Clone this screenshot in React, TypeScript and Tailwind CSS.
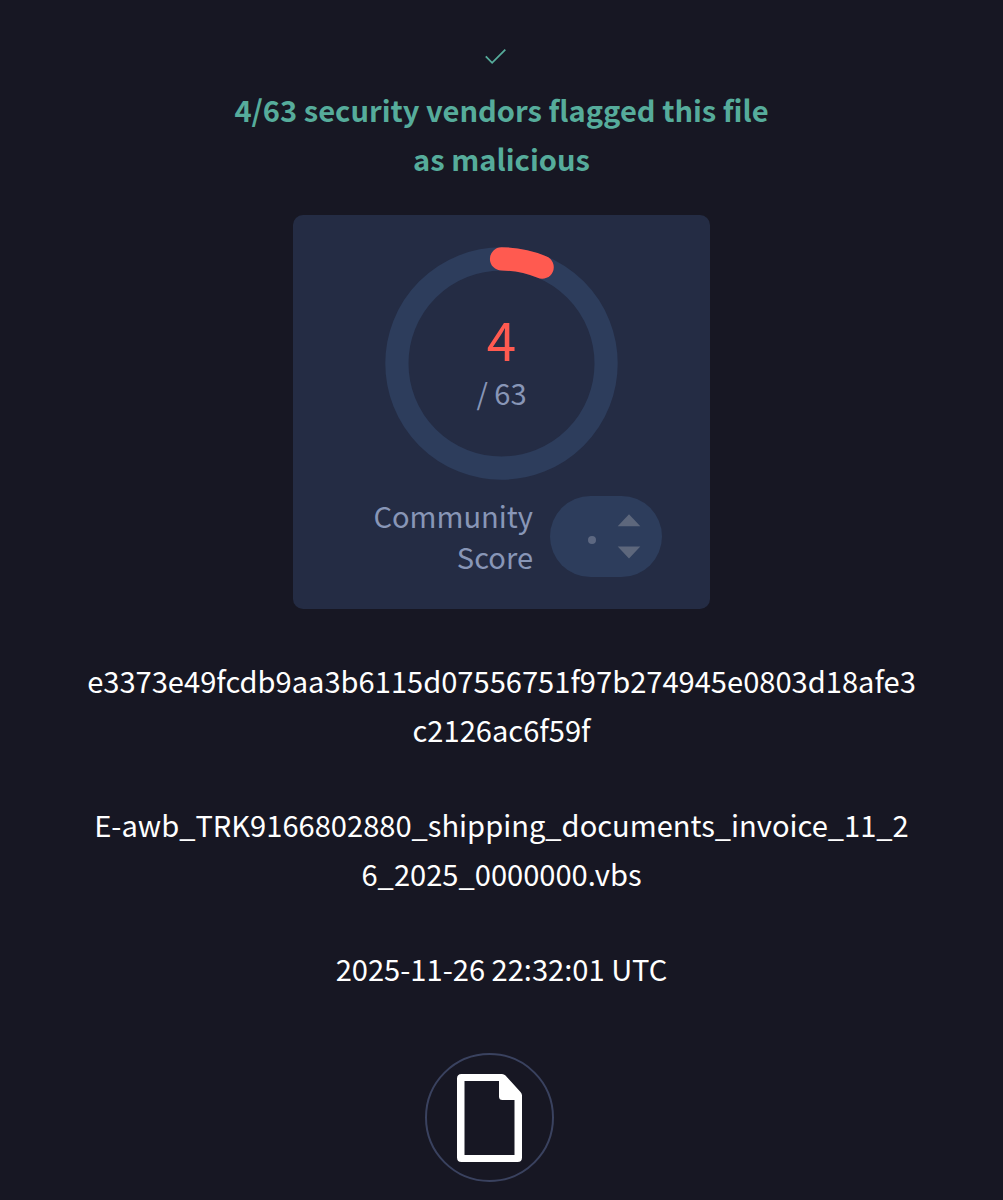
const DETECTIONS = 4;
const ENGINES = 63;

const report = {
  hash: ["e3373e49fcdb9aa3b6115d07556751f97b274945e0803d18afe3", "c2126ac6f59f"],
  fileName: ["E-awb_TRK9166802880_shipping_documents_invoice_11_2", "6_2025_0000000.vbs"],
  date: "2025-11-26 22:32:01 UTC",
};

export default function App() {
  return (
    <main className="flex h-[1200px] w-full flex-col items-center overflow-hidden bg-[#171723] text-[29.1px] leading-[49px] text-white font-['Noto_Sans_CJK_SC','Noto_Sans',sans-serif]">
      <header className="flex flex-col items-center pt-[46px]">
        <CheckIcon />
        <h1 className="mt-[19px] text-center font-bold whitespace-nowrap text-[#56ac9b]">
          {DETECTIONS}/{ENGINES} security vendors flagged this file
          <br />
          as malicious
        </h1>
      </header>

      <section className="mt-8 flex h-[394px] w-[417px] flex-col items-center rounded-[10px] bg-[#242c44] pt-8">
        <Gauge value={DETECTIONS} total={ENGINES} />
        <div className="mt-[16px] flex w-full items-center justify-end pr-12">
          <p className="mr-[17px] text-right leading-[41px] text-[#8896b7]">
            Community
            <br />
            Score
          </p>
          <ScorePill />
        </div>
      </section>

      <Lines className="mt-[47px]" lines={report.hash} />
      <Lines className="mt-[46px]" lines={report.fileName} />
      <Lines className="mt-[46px]" lines={[report.date]} />

      <div className="mt-[60px] mr-6 flex size-[129px] shrink-0 items-center justify-center rounded-full border-2 border-[#3a425f]">
        <FileIcon />
      </div>
    </main>
  );
}

function Lines({ lines, className }: { lines: string[]; className: string }) {
  return (
    <div className={`text-center whitespace-nowrap ${className}`}>
      {lines.map((line) => (
        <p key={line}>{line}</p>
      ))}
    </div>
  );
}

function Gauge({ value, total }: { value: number; total: number }) {
  const radius = 104.6;
  const length = 2 * Math.PI * radius;

  return (
    <div className="grid h-[232px] w-[233px] shrink-0 place-items-center">
      <svg
        viewBox="0 0 233 233"
        className="col-start-1 row-start-1 size-[233px] -rotate-90"
        fill="none"
        strokeWidth="23.2"
      >
        <circle cx="116.5" cy="116.5" r={radius} stroke="#2d3d5c" />
        <circle
          cx="116.5"
          cy="116.5"
          r={radius}
          stroke="#ff5a50"
          strokeLinecap="round"
          strokeDasharray={`${(length * value) / total} ${length}`}
        />
      </svg>
      <div className="col-start-1 row-start-1 flex flex-col items-center pb-[7px]">
        <span className="text-[53px] leading-[63px] text-[#ff5a50]">{value}</span>
        <span className="leading-[44px] text-[#8896b7]">/ {total}</span>
      </div>
    </div>
  );
}

function ScorePill() {
  return (
    <div className="flex h-[81px] w-28 shrink-0 items-center rounded-full bg-[#2d3d5c]">
      <span className="mt-[7px] ml-[38px] size-2 rounded-full bg-[#5d6881]" />
      <svg viewBox="0 0 24 46" className="ml-[21px] h-[46px] w-6" fill="#5d677c">
        <path d="M12 1.3 23.300 13.300H.7Z" />
        <path d="M12 45.600 .7 33.500H23.300Z" />
      </svg>
    </div>
  );
}

function CheckIcon() {
  return (
    <svg viewBox="0 0 22 20" className="mr-[11px] h-5 w-[22px]" fill="none" stroke="#56ac9b" strokeWidth="1.8">
      <path d="M.8 10.3 7.1 16.8 20.3 3.6" />
    </svg>
  );
}

function FileIcon() {
  return (
    <svg viewBox="0 0 65 88" className="h-[88px] w-[65px]" fill="#ffffff">
      <path
        fillRule="evenodd"
        d="M4.5 0H45Q47 0 48.500 1.500L63.500 18Q65 19.500 65 21.500V83.500Q65 88 60.500 88H4.500Q0 88 0 83.500V4.500Q0 0 4.500 0ZM7.500 7V81H57.500V26H45.500Q42 26 42 22.500V7Z"
      />
    </svg>
  );
}
